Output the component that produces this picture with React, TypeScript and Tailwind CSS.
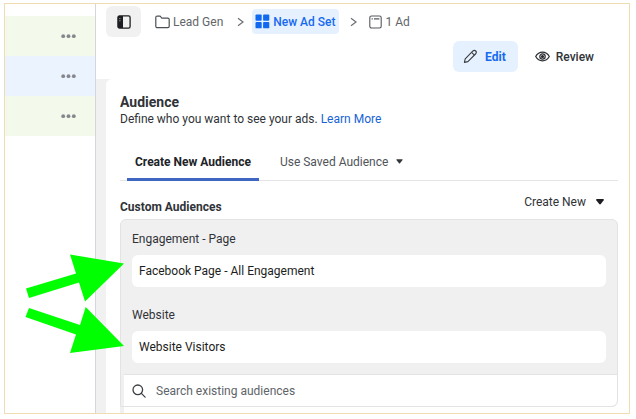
import React from "react";

const rows = [
  { id: "campaign", label: "Campaign options", tone: "bg-[#f3f9eb]" },
  { id: "adset", label: "Ad set options", tone: "bg-[#ebf3ff]" },
  { id: "ad", label: "Ad options", tone: "bg-[#f3f9eb]" },
];

function Dots() {
  return (
    <svg width="15" height="5" viewBox="0 0 15 5" fill="#85878c" aria-hidden="true">
      <circle cx="2.2" cy="2.2" r="1.9" />
      <circle cx="7.5" cy="2.2" r="1.9" />
      <circle cx="12.8" cy="2.2" r="1.9" />
    </svg>
  );
}

function PanelIcon() {
  return (
    <svg width="14" height="14" viewBox="0 0 14 14" aria-hidden="true">
      <rect x="0.9" y="0.9" width="12.2" height="12.2" rx="1.6" fill="none" stroke="#1c1e21" strokeWidth="1.3" />
      <path d="M1 1h5v12H1z" fill="#1c1e21" />
      <path d="M2.2 3.6h1.3M2.2 5.8h1.3" stroke="#b8b8b8" strokeWidth="0.8" />
    </svg>
  );
}

function FolderIcon() {
  return (
    <svg width="15" height="14" viewBox="0 0 15 14" fill="none" stroke="#4b4f54" strokeWidth="1.2" aria-hidden="true">
      <path d="M0.8 2.4c0-.8.5-1.3 1.3-1.3h2.7c.5 0 .8.2 1 .6l.6 1.1c.1.3.4.4.7.4h5.7c.8 0 1.4.6 1.4 1.4v6.7c0 .8-.6 1.4-1.4 1.4H2.2c-.8 0-1.4-.6-1.4-1.4z" />
    </svg>
  );
}

function GridIcon() {
  return (
    <svg width="15" height="15" viewBox="0 0 15 15" fill="#1169f0" aria-hidden="true">
      <rect x="0.5" y="0.5" width="6.2" height="6.2" rx="0.9" />
      <rect x="8.1" y="0.5" width="6.2" height="6.2" rx="0.9" />
      <rect x="0.5" y="8.1" width="6.2" height="6.2" rx="0.9" />
      <rect x="8.1" y="8.1" width="6.2" height="6.2" rx="0.9" />
    </svg>
  );
}

function AdIcon() {
  return (
    <svg width="13" height="14" viewBox="0 0 13 14" fill="none" stroke="#55595e" strokeWidth="1.1" aria-hidden="true">
      <rect x="0.8" y="1" width="11.4" height="12" rx="1.7" />
      <path d="M2.6 3.9h1.2M5 3.9h5.4" />
    </svg>
  );
}

function Chevron() {
  return (
    <svg width="7" height="10" viewBox="0 0 7 10" fill="none" stroke="#6b6e73" strokeWidth="1.2" aria-hidden="true">
      <path d="M1 1.2 6 5 1 8.8" />
    </svg>
  );
}

function PencilIcon() {
  return (
    <svg width="15" height="15" viewBox="0 0 15 15" fill="none" stroke="#3a3d41" strokeWidth="1.1" strokeLinejoin="round" aria-hidden="true">
      <path d="M1.4 13.4 2.200 9.900 9.700 2.200c1-1 2.200-1 3-.2.8.8.8 2-.2 3L4.900 12.600z" />
      <path d="m8.600 3.400 2.800 2.700" />
    </svg>
  );
}

function EyeIcon() {
  return (
    <svg width="15" height="11" viewBox="0 0 15 11" fill="none" stroke="#2a2d31" strokeWidth="1.2" aria-hidden="true">
      <path d="M0.7 5.5C2.3 2.7 4.7 1.2 7.5 1.2s5.2 1.5 6.8 4.3c-1.6 2.8-4 4.3-6.8 4.3S2.3 8.3.7 5.5z" />
      <circle cx="7.5" cy="5.5" r="2.7" />
      <circle cx="7.5" cy="5.5" r="1" fill="#2a2d31" />
    </svg>
  );
}

function SearchIcon() {
  return (
    <svg width="14" height="14" viewBox="0 0 14 14" fill="none" stroke="#3d4145" strokeWidth="1.3" strokeLinecap="round" aria-hidden="true">
      <circle cx="5.8" cy="5.8" r="4.8" />
      <path d="m9.4 9.4 3.7 3.7" />
    </svg>
  );
}

function SmallCaret() {
  return (
    <svg width="7" height="5" viewBox="0 0 7 5" fill="#33363a" aria-hidden="true">
      <path d="M1 .3h5c.6 0 .8.5.4.9L4 4.2c-.3.4-.7.4-1 0L.6 1.2C.2.8.4.3 1 .3z" />
    </svg>
  );
}

function LargeCaret() {
  return (
    <svg width="8" height="6" viewBox="0 0 8 6" fill="#1c1e21" aria-hidden="true">
      <path d="M.9 0h6.2c.8 0 1 .7.6 1.3L4.8 5c-.5.6-1.1.6-1.6 0L.3 1.3C-.1.7.1 0 .9 0z" />
    </svg>
  );
}

function AudienceField({ id, label, value }: { id: string; label: string; value: string }) {
  return (
    <div className="flex flex-col gap-2">
      <label htmlFor={id} className="leading-4">
        {label}
      </label>
      <input
        id={id}
        type="text"
        defaultValue={value}
        className="h-8 w-full rounded-md bg-white px-[7px] text-[#1c1e21] outline-none"
      />
    </div>
  );
}

function Arrows() {
  return (
    <svg
      className="pointer-events-none absolute top-[246px] left-5 h-[108px] w-[100px]"
      viewBox="0 0 100 108"
      fill="#00ff00"
      aria-hidden="true"
    >
      <path d="M1 38.5 51 23.5 45 4.5 99 13.5 60 51.5 54 32.5 4 48z" />
      <path d="M4 58 55 75 60.7 57 99 96 45 103 51 84.5 0.5 67z" />
    </svg>
  );
}

export default function App() {
  return (
    <div className="flex h-screen bg-white pt-[3px] pr-[6px] pb-[5px] pl-1 font-['Roboto',sans-serif] text-xs text-[#303338]">
      <div className="relative flex min-w-0 flex-1 overflow-hidden border border-[#eddcb4]">
        <aside className="w-[90px] shrink-0 pt-3">
          {rows.map((row) => (
            <div key={row.id} className={`flex h-10 items-center justify-end pr-[19px] ${row.tone}`}>
              <button type="button" aria-label={row.label}>
                <Dots />
              </button>
            </div>
          ))}
        </aside>

        <main className="flex min-w-0 flex-1 flex-col border-l border-[#d5d6d8] bg-[#f1f1f2]">
          <header className="h-[75px] shrink-0 bg-white pt-0.5 pl-[10px]">
            <nav aria-label="Breadcrumb" className="flex items-center text-[#626569]">
              <button
                type="button"
                aria-label="Toggle side panel"
                className="mr-[14px] flex h-[31px] w-[35px] items-center justify-center rounded-md bg-[#f1f1f1]"
              >
                <PanelIcon />
              </button>
              <a href="#campaign" className="flex items-center gap-[3px]">
                <FolderIcon />
                Lead Gen
              </a>
              <span className="mr-2 ml-[14px]">
                <Chevron />
              </span>
              <a
                href="#adset"
                className="flex h-[25px] items-center gap-[3px] rounded-[4px] bg-[#e6f1ff] px-[3px] font-medium text-[#1769f0]"
              >
                <GridIcon />
                New Ad Set
              </a>
              <span className="mr-3 ml-[11px]">
                <Chevron />
              </span>
              <a href="#ad" className="flex items-center gap-1">
                <AdIcon />1 Ad
              </a>
            </nav>
            <div className="mt-1 flex justify-end gap-[17px] pr-[35px]">
              <button
                type="button"
                className="flex h-[31px] items-center gap-[7px] rounded-md bg-[#e6f1ff] pr-3 pl-[10px] font-bold text-[#1769f0]"
              >
                <PencilIcon />
                Edit
              </button>
              <button type="button" className="flex h-[31px] items-center gap-[6px] font-medium">
                <EyeIcon />
                Review
              </button>
            </div>
          </header>

          <section className="ml-[10px] flex-1 rounded-tl-md bg-white pt-[14px] pr-[11px] pl-[14px]">
            <h1 className="text-sm leading-[18px] font-bold">Audience</h1>
            <p className="leading-4">
              Define who you want to see your ads.{" "}
              <a href="#learn" className="text-[#1763d8]">
                Learn More
              </a>
            </p>

            <div role="tablist" className="mt-[18px] flex h-9 border-b border-[#e4e5e7] pl-[7px]">
              <button
                type="button"
                role="tab"
                aria-selected="true"
                className="h-9 border-b-[3px] border-[#3f66c0] px-2 font-bold text-[#202327]"
              >
                Create New Audience
              </button>
              <button
                type="button"
                role="tab"
                aria-selected="false"
                className="ml-[21px] flex h-[33px] items-center gap-2 text-[#505459]"
              >
                Use Saved Audience
                <SmallCaret />
              </button>
            </div>

            <div className="flex items-start justify-between pt-[13px] pr-[14px] pb-1">
              <h2 className="pt-[5px] leading-4 font-bold">Custom Audiences</h2>
              <button type="button" className="flex items-center gap-[10px] leading-4">
                Create New
                <LargeCaret />
              </button>
            </div>

            <div className="rounded-t-md rounded-br-md border border-[#e3e3e4] bg-[#f0f0f0]">
              <div className="flex flex-col gap-5 px-[11px] pt-[11px] pb-[11px]">
                <AudienceField id="page" label="Engagement - Page" value="Facebook Page - All Engagement" />
                <AudienceField id="website" label="Website" value="Website Visitors" />
              </div>
              <div className="pl-[3px]">
                <label className="flex h-8 items-center gap-[10px] rounded-br-md border-t border-[#e3e3e4] bg-white pl-2">
                  <SearchIcon />
                  <input
                    type="search"
                    aria-label="Search existing audiences"
                    placeholder="Search existing audiences"
                    className="min-w-0 flex-1 outline-none placeholder:text-[#606468]"
                  />
                </label>
              </div>
            </div>
            <div className="h-2 border-l-4 border-[#f0f0f0]" />
          </section>
        </main>
        <Arrows />
      </div>
    </div>
  );
}
